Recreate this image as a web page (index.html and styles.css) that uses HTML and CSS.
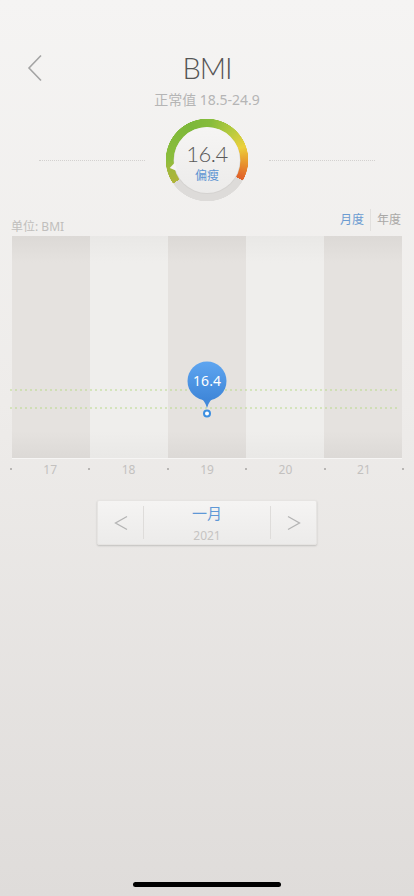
FILE: index.html
```html
<!DOCTYPE html>
<html lang="zh-CN">
<head>
    <meta charset="UTF-8">
    <meta name="viewport" content="width=device-width, initial-scale=1.0">
    <title>BMI</title>
    <link rel="stylesheet" href="styles.css">
</head>
<body>
    <div class="page">
        <!-- 标题栏 -->
        <div class="title-row">
            <div class="back">
                <svg width="16" height="28" viewBox="0 0 16 28">
                    <path d="M14 1.5 L2 14 L14 26.5" fill="none" stroke="#a4a4a4" stroke-width="1.6"/>
                </svg>
            </div>
            <div class="title">BMI</div>
            <div></div>
        </div>
        <div class="subtitle">正常值 18.5-24.9</div>

        <!-- 仪表 -->
        <div class="gauge-row">
            <div class="dots"></div>
            <div class="gauge">
                <div class="ring"></div>
                <svg class="disc" width="88" height="88" viewBox="0 0 88 88">
                    <defs>
                        <linearGradient id="discFill" x1="0" y1="0" x2="0" y2="1">
                            <stop offset="0" stop-color="#f6f5f4"/>
                            <stop offset="1" stop-color="#ecebea"/>
                        </linearGradient>
                    </defs>
                    <circle cx="44" cy="44.6" r="33.4" fill="#d4d2d0"/>
                    <circle cx="44" cy="44" r="33" fill="url(#discFill)"/>
                    <polygon points="6.8,51.9 13.9,54.9 12.1,46.2" fill="#f5f4f3"/>
                </svg>
                <div class="gauge-text">
                    <div class="gauge-value">16.4</div>
                    <div class="gauge-label">偏瘦</div>
                </div>
            </div>
            <div class="dots"></div>
        </div>

        <!-- 图表 -->
        <div class="chart-head">
            <div class="unit">单位: BMI</div>
            <div class="tabs">
                <span class="tab on">月度</span>
                <span class="tab-sep"></span>
                <span class="tab">年度</span>
            </div>
        </div>
        <div class="chart">
            <div class="col dark"></div>
            <div class="col"></div>
            <div class="col dark"></div>
            <div class="col"></div>
            <div class="col dark"></div>
            <svg class="overlay" width="390" height="222" viewBox="0 0 390 222">
                <defs>
                    <linearGradient id="bubble" x1="0" y1="0" x2="0" y2="1">
                        <stop offset="0" stop-color="#5ea5f0"/>
                        <stop offset="1" stop-color="#3f86d8"/>
                    </linearGradient>
                </defs>
                <line x1="-2" y1="154" x2="385" y2="154" stroke="#b9d98a" stroke-width="1.2" stroke-dasharray="2 3"/>
                <line x1="-2" y1="172" x2="385" y2="172" stroke="#b9d98a" stroke-width="1.2" stroke-dasharray="2 3"/>
                <path d="M186 160 Q193 164 195 172 Q197 164 204 160 Z" fill="#4289da"/>
                <circle cx="195" cy="145" r="19.5" fill="url(#bubble)"/>
                <text x="195" y="150" text-anchor="middle" class="bubble-text">16.4</text>
                <circle cx="195" cy="177.5" r="3" fill="#fff" stroke="#3d8fe0" stroke-width="2"/>
            </svg>
        </div>
        <div class="axis">
            <span class="tick"></span><span class="lbl">17</span>
            <span class="tick"></span><span class="lbl">18</span>
            <span class="tick"></span><span class="lbl">19</span>
            <span class="tick"></span><span class="lbl">20</span>
            <span class="tick"></span><span class="lbl">21</span>
            <span class="tick"></span>
        </div>

        <!-- 月份选择 -->
        <div class="picker">
            <div class="arrow">
                <svg width="14" height="16" viewBox="0 0 14 16">
                    <path d="M13 1.5 L1.5 8 L13 14.5" fill="none" stroke="#b4b4b4" stroke-width="1.3"/>
                </svg>
            </div>
            <div class="month">
                <div class="month-name">一月</div>
                <div class="year">2021</div>
            </div>
            <div class="arrow">
                <svg width="14" height="16" viewBox="0 0 14 16">
                    <path d="M1 1.5 L12.5 8 L1 14.5" fill="none" stroke="#b4b4b4" stroke-width="1.3"/>
                </svg>
            </div>
        </div>
    </div>
    <div class="home-bar"></div>
</body>
</html>
```

FILE: styles.css
```css
body {
    margin: 0;
    width: 414px;
    height: 896px;
    overflow: hidden;
    position: relative;
    font-family: "Noto Sans", "Noto Sans CJK SC", sans-serif;
    background: linear-gradient(#f5f4f3 0%, #eeecea 45%, #dfdcda 100%);
}

.page {
    padding-top: 48px;
}

.title-row {
    display: grid;
    grid-template-columns: 1fr auto 1fr;
    align-items: center;
    height: 40px;
}

.back {
    padding-left: 27px;
    height: 28px;
}

.title {
    font-family: Lato, "Noto Sans", sans-serif;
    font-size: 29px;
    font-weight: 300;
    color: #555;
    line-height: 40px;
    letter-spacing: -1px;
}

.subtitle {
    margin-top: 2px;
    text-align: center;
    font-size: 14px;
    line-height: 20px;
    color: #b5b5b5;
}

.gauge-row {
    margin-top: 6px;
    display: flex;
    align-items: center;
    justify-content: center;
    height: 88px;
}

.dots {
    width: 106px;
    border-top: 1px dotted #d3d1cf;
    margin: 0 18px;
}

.gauge {
    position: relative;
    width: 88px;
    height: 88px;
}

.ring {
    width: 88px;
    height: 88px;
    border-radius: 50%;
    background: conic-gradient(from 235deg,
        #b0b43a 0deg, #a0b83c 22deg, #8bbd3c 36deg, #7db83a 100deg,
        #86bc3c 130deg, #b5ca3e 165deg, #ecd03c 195deg, #e9a030 215deg,
        #e2672a 240deg, #e0622a 245deg, #dddbd9 245deg, #dddbd9 360deg);
    -webkit-mask: radial-gradient(circle, transparent 32px, #000 32.5px, #000 41px, transparent 41.5px);
    mask: radial-gradient(circle, transparent 32px, #000 32.5px, #000 41px, transparent 41.5px);
}

.disc {
    position: absolute;
    left: 0;
    top: 0;
}

.gauge-text {
    position: absolute;
    inset: 0;
    display: flex;
    flex-direction: column;
    align-items: center;
    padding-top: 27px;
}

.gauge-value {
    font-family: Lato, "Noto Sans", sans-serif;
    font-size: 22px;
    font-weight: 300;
    line-height: 22px;
    color: #5a5a5a;
    letter-spacing: -0.5px;
}

.gauge-label {
    margin-top: 4px;
    font-size: 12px;
    line-height: 14px;
    color: #5b94d2;
}

.chart-head {
    margin: 4px 13px 0 11px;
    height: 26px;
    display: flex;
    justify-content: space-between;
    align-items: flex-start;
}

.unit {
    margin-top: 11px;
    font-size: 12px;
    line-height: 16px;
    color: #c0bebc;
}

.tabs {
    display: flex;
    align-items: center;
    height: 24px;
}

.tab {
    font-size: 12px;
    line-height: 24px;
    color: #aaa8a6;
}

.tab.on {
    color: #6b9bd1;
}

.tab-sep {
    width: 1px;
    height: 22px;
    background: #e2e0de;
    margin: 0 6px;
}

.chart {
    position: relative;
    margin: 2px 12px 0 12px;
    height: 222px;
    display: flex;
    box-shadow: inset 0 0 28px rgba(110, 100, 95, 0.26), inset 0 -8px 14px rgba(110, 100, 95, 0.06);
    border-bottom: 1px solid #f6f5f4;
}

.col {
    flex: 1;
    background: linear-gradient(#e9e8e6, #efeeec 12%, #efeeec 88%, #e9e8e6);
}

.col.dark {
    background: linear-gradient(#dcd9d6, #e5e2df 12%, #e5e2df 88%, #dcd9d6);
}

.overlay {
    position: absolute;
    left: 0;
    top: 0;
    overflow: visible;
}

.bubble-text {
    font-family: "Noto Sans", sans-serif;
    font-size: 14px;
    fill: #fff;
}

.axis {
    margin: 0 10px;
    height: 20px;
    display: flex;
    align-items: center;
}

.tick {
    width: 2px;
    height: 2px;
    background: #b8b6b4;
}

.lbl {
    flex: 1;
    text-align: center;
    font-size: 12px;
    color: #c3c1bf;
}

.picker {
    margin: 21px auto 0;
    width: 218px;
    height: 43px;
    display: flex;
    align-items: center;
    background: linear-gradient(#f5f4f3, #ecebea);
    border: 1px solid #e6e4e2;
    box-shadow: 0 1px 2px rgba(0, 0, 0, 0.18);
    border-radius: 2px;
}

.arrow {
    width: 45px;
    height: 33px;
    display: flex;
    align-items: center;
    justify-content: center;
}

.month {
    flex: 1;
    height: 33px;
    border-left: 1px solid #dedcda;
    border-right: 1px solid #dedcda;
    display: flex;
    flex-direction: column;
    align-items: center;
}

.month-name {
    font-size: 15px;
    line-height: 20px;
    color: #5f98d6;
    margin-top: -3px;
}

.year {
    font-size: 12px;
    line-height: 16px;
    color: #c6c4c2;
    margin-top: 5px;
}

.home-bar {
    position: absolute;
    left: 133px;
    top: 882px;
    width: 148px;
    height: 5px;
    border-radius: 3px;
    background: #000;
}
```
